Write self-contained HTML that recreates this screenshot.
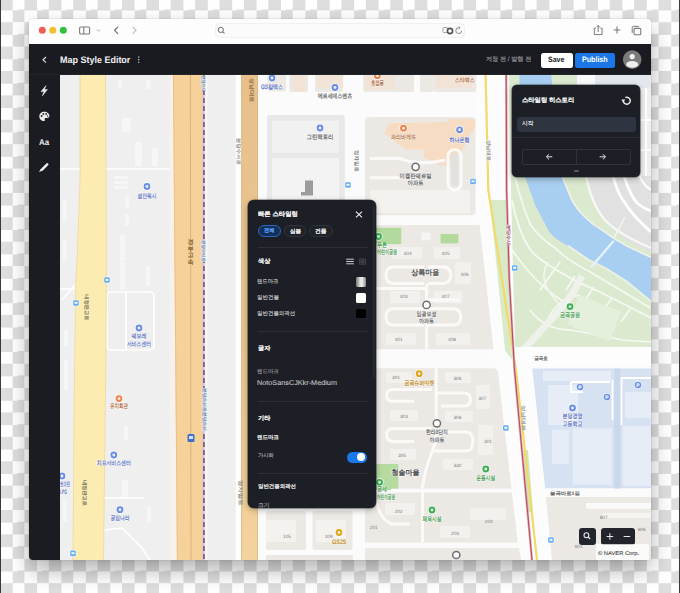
<!DOCTYPE html>
<html><head><meta charset="utf-8">
<style>
*{margin:0;padding:0;box-sizing:border-box}
html,body{width:680px;height:593px;overflow:hidden}
body{position:relative;font-family:"Liberation Sans",sans-serif;
background-color:#fff;
background-image:conic-gradient(#fff 0 25%,#dedede 0 50%,#fff 0 75%,#dedede 0);
background-size:24.4px 24.4px;background-position:0 -2.2px}
.abs{position:absolute}
.edgeL{position:absolute;left:0;top:0;width:1px;height:593px;background:#3a3a3a}
.edgeR{position:absolute;left:679px;top:0;width:1px;height:593px;background:#3a3a3a}
.win{position:absolute;left:28.8px;top:18.6px;width:622.2px;height:541.8px;border-radius:4px;overflow:hidden;
box-shadow:0 0 2px rgba(0,0,0,.2),0 10px 22px rgba(0,0,0,.3);background:#eee}
.pg{position:absolute;left:-28.8px;top:-18.6px;width:680px;height:593px}
.tb{position:absolute;left:28px;top:18px;width:624px;height:26px;background:#fdfdfd}
.hdr{position:absolute;left:28px;top:44px;width:624px;height:31px;background:#191b21;border-bottom:1px solid #22252c}
.side{position:absolute;left:28px;top:75px;width:32px;height:486px;background:#1a1c22}
.map{position:absolute;left:60px;top:74px;width:591px;height:486px;background:#efefef;overflow:hidden}
.txt{position:absolute;white-space:nowrap;line-height:1}
.tx{position:absolute;white-space:nowrap;line-height:1;font-size:40px;transform-origin:0 0;text-rendering:geometricPrecision}
.kr{font-family:"Liberation Sans",sans-serif}
.panel{position:absolute;background:#1c1f25;border-radius:6px;box-shadow:0 0 0 0.6px rgba(0,0,0,.55),0 2px 6px rgba(0,0,0,.3)}
.sep{position:absolute;height:1px;background:#2c2f36}
</style></head><body>
<div class="edgeL"></div><div class="edgeR"></div>
<div class="win"><div class="pg">
  <div class="map"><svg class="abs" style="left:0;top:0" width="591" height="486" viewBox="60 74 591 486" font-family="Liberation Sans, sans-serif">
<rect x="60" y="74" width="591" height="486" fill="#fbfbfb"/>
<!-- ===== LEFT ZONE ===== -->
<rect x="60" y="74" width="198" height="486" fill="#efefef"/>
<g fill="#f6f6f6">
<rect x="118" y="80" width="4" height="9"/><rect x="146" y="80" width="5" height="9"/>
<rect x="122" y="118" width="9" height="14"/><rect x="135" y="142" width="7" height="24"/><rect x="152" y="148" width="6" height="18"/>
<rect x="114" y="176" width="14" height="3"/><rect x="114" y="181" width="14" height="3"/><rect x="114" y="186" width="14" height="3"/>
<rect x="125" y="196" width="4" height="12"/><rect x="125" y="214" width="4" height="12"/>
<rect x="120" y="235" width="5" height="26"/><rect x="120" y="262" width="5" height="28"/><rect x="146" y="266" width="4" height="20"/>
<rect x="63" y="200" width="4" height="20"/><rect x="63" y="240" width="4" height="20"/>
<rect x="64" y="330" width="4" height="16"/><rect x="64" y="360" width="4" height="30"/>
<rect x="124" y="425" width="4" height="15"/><rect x="122" y="480" width="6" height="18"/><rect x="147" y="506" width="4" height="16"/>
<rect x="63" y="500" width="4" height="22"/>
</g>
<g stroke="#ffffff" fill="none" stroke-width="1.6">
<path d="M60 169H80M105 169H173"/>
<path d="M60 289H76M62 300L76 284"/>
<rect x="107" y="292" width="47" height="58" rx="4"/>
<path d="M126 292V350"/>
<path d="M104 498H144"/>
<path d="M104 530L122 528L142 548L150 560"/>
</g>
<path d="M80 74H105.5L106.4 250L106 350L103.5 560H73L74 420L75.7 285L77.5 250L80 180Z" fill="#fcecb1"/>
<path d="M80 74L80 180L77.5 250L75.7 285L74 420L73 560" stroke="#f1d79a" stroke-width="0.8" fill="none"/>
<path d="M105.5 74L106.4 250L106 350L103.5 560" stroke="#f1d79a" stroke-width="0.8" fill="none"/>
<path d="M169.5 74H173L177 560H170Z" fill="#f6f1ec"/>
<path d="M173 74H202.5L203.3 560H177Z" fill="#f6d199"/>
<path d="M173.4 74L177.4 560M202.2 74L203 560" stroke="#ebbb7e" stroke-width="0.8"/>
<path d="M190.4 74L191 560" stroke="#dcae74" stroke-width="0.9"/>
<rect x="202.4" y="74" width="3" height="486" fill="#dccbdc"/>
<path d="M203.9 74V560" stroke="#6f5b74" stroke-width="1.6" stroke-dasharray="5 3"/>
<rect x="205.4" y="74" width="1.8" height="486" fill="#fafafa"/>
<rect x="235.8" y="74" width="5.5" height="486" fill="#ffffff"/>
<defs><linearGradient id="og" x1="0" y1="0" x2="0" y2="1"><stop offset="0" stop-color="#e8c08b"/><stop offset="0.55" stop-color="#eac592"/><stop offset="1" stop-color="#f5d39c"/></linearGradient></defs><rect x="241.3" y="74" width="16.5" height="486" fill="url(#og)"/>
<path d="M241.6 74V560M257.5 74V560" stroke="#dcb078" stroke-width="0.7"/>

<!-- ===== CENTER ZONE ===== -->
<g fill="#ece9e5">
<!-- top row -->
<rect x="267.4" y="70" width="18.6" height="21.6" rx="2"/>
<rect x="289.4" y="70" width="18.6" height="22" rx="2"/>
<rect x="315" y="70" width="28.2" height="22" rx="2"/>
<rect x="363" y="70" width="51" height="22" rx="2"/>
<rect x="420" y="70" width="14" height="22" rx="2"/>
<rect x="434" y="70" width="42.5" height="22" rx="2"/>
<!-- row 2 -->
<rect x="266.8" y="115" width="78" height="100" rx="3" fill="#e8e8e8"/>
<rect x="365" y="117" width="110.5" height="98.3" rx="4"/>
<!-- row 3 (behind panel) -->
<rect x="266" y="225" width="76" height="124" rx="3"/>
<path d="M350 225H479.8L493.7 349.2H350Z"/>
<!-- row 4 -->
<rect x="266" y="362" width="76" height="128" rx="3"/>
<path d="M350 368.3H493Q497 368.3 498 372L511.7 488.7H350Z"/>
<!-- row 5 -->
<rect x="266" y="511" width="40" height="39" rx="2"/>
<rect x="312.5" y="511" width="40" height="39" rx="2"/>
<path d="M365 492.5H512L518 542.5H365Z"/>
<path d="M365 548H519L522 565H365Z"/>
<rect x="266" y="555" width="87" height="10"/>
</g>
<!-- buildings light in blocks -->
<g fill="#f4f2ef">
<rect x="272" y="120.7" width="67" height="32" rx="1" fill="#f1f1f1"/>
<rect x="272" y="158" width="67" height="57" fill="#f3f3f3"/>
<rect x="370" y="190" width="100" height="23"/>
<rect x="266" y="520" width="30" height="22"/><rect x="316" y="520" width="30" height="22"/>
</g>
<g fill="#f1e3d5">
<rect x="292" y="74" width="13" height="18"/>
<rect x="317" y="74" width="26" height="14"/>
<rect x="365" y="74" width="30" height="16"/>
<rect x="436" y="74" width="36" height="14"/>
</g>
<!-- peach landmark building -->
<path d="M384.2 133.3L389.3 123.2L446 122.1L450 119.1L475.3 119.1L475.3 126.2L462.2 150.5L446 165.7L438.9 164.7L423.7 157.6L423.7 149.5L405.5 149.5Z" fill="#f5dcc2"/>
<!-- dark 3d building -->
<path d="M305 180.6H313V195.5H301V192H305Z" fill="#9c9c9c"/>
<!-- green patches -->
<rect x="376" y="227.7" width="25.3" height="16.4" fill="#b3da9d"/>
<rect x="440.6" y="234" width="17.7" height="9.4" fill="#b3da9d"/>
<rect x="421.6" y="232.7" width="8.8" height="7.6" fill="#f6f5f3"/>
<rect x="376" y="464" width="22.4" height="24.7" fill="#b6dba1"/>
<rect x="370" y="480" width="21" height="10" fill="#b6dba1"/>
<rect x="560" y="514" width="11" height="6" fill="#bfe0ab"/>
<!-- light buildings -->
<g fill="#f3f1ee">
<rect x="392" y="247" width="30" height="12" rx="1"/><rect x="434" y="247" width="26" height="12" rx="1"/>
<rect x="455" y="262" width="16" height="22" rx="1"/>
<rect x="390" y="291" width="30" height="12" rx="1"/><rect x="434" y="291" width="28" height="12" rx="1"/>
<rect x="386" y="333" width="30" height="12" rx="1"/><rect x="436" y="333" width="34" height="12" rx="1"/>
<rect x="386" y="372" width="26" height="11" rx="1"/><rect x="445" y="372" width="26" height="11" rx="1"/>
<rect x="476" y="385" width="14" height="24" rx="1"/>
<rect x="390" y="410" width="28" height="11" rx="1"/><rect x="445" y="411" width="28" height="11" rx="1"/>
<rect x="478" y="425" width="15" height="30" rx="1"/>
<rect x="390" y="449" width="26" height="11" rx="1"/><rect x="443" y="459" width="30" height="11" rx="1"/>
<rect x="385" y="503" width="30" height="12" rx="1"/><rect x="470" y="508" width="36" height="12" rx="1"/>
<rect x="440" y="526" width="30" height="12" rx="1"/>
</g>
<!-- white inner roads / loops -->
<g stroke="#fbfaf8" fill="none" stroke-width="3">
<path d="M426.6 284V349"/>
<path d="M376 288.5H426.6M426.6 300H460"/>
<path d="M424 267H393Q386 267 386 275Q386 283.4 393 283.4H424"/>
<path d="M428 267H443Q450.7 267 450.7 275Q450.7 283.4 443 283.4H428"/>
<path d="M424 308.7H393Q386 308.7 386 316.8Q386 325 393 325H424"/>
<path d="M428 308.7H453Q460.8 308.7 460.8 316.8Q460.8 325 453 325H428"/>
<path d="M436.2 368.3V423.7Q436 440 433.8 447.3Q428 462 425.6 471L422 488.7"/>
<path d="M432 389.5H393Q386.6 389.5 386.6 395.4Q386.6 401.3 393 401.3H414"/>
<path d="M436.2 393H464Q470.4 393 470.4 399.5Q470.4 406 464 406H441"/>
<path d="M432 428.5H393Q386.6 428.5 386.6 435Q386.6 441.4 393 441.4H414"/>
<path d="M436 432H466Q472.8 432 472.8 441.5Q472.8 451 466 451H433"/>
<path d="M422.5 492.5V542M376 500Q380 520 392 524H410M365 545H520"/>
<rect x="448" y="149.5" width="13.2" height="40.5" rx="6.6"/>
<path d="M370 158.6H400Q420 166 445 160M370 177.8H400"/>
<path d="M345 98L375 114M345 114L375 98"/>
</g>
<g fill="#e3e1dd"><rect x="451" y="153" width="7" height="33" rx="3"/></g>

<!-- ===== RIGHT ZONE ===== -->
<!-- park west of river -->
<path d="M508 74H651V347H515Z" fill="#dbeacf"/>
<!-- gray urban NE of river -->
<path d="M587 176H651V252Q636 247 626 240Q610 230 601 218Q592 200 587 176Z" fill="#e1e1e1"/>
<path d="M577 74H651V90H577Z" fill="#fafafa"/>
<path d="M595 74H651V88H595Z" fill="#e3e8ef"/>
<path d="M586 176Q592 205 605 220Q618 234 651 248" stroke="#f7f7f3" stroke-width="2.4" fill="none"/>
<g stroke="#ffffff" fill="none" stroke-width="2.8">
<path d="M613 176Q618 195 625 203Q632 215 651 232"/>
<path d="M624 176Q630 195 637 203Q643 208 651 211"/>
</g>
<path d="M625 217L613 240" stroke="#f4f4f4" stroke-width="1.6"/>
<path d="M640 176Q642 184 651 190" stroke="#fff" stroke-width="2" fill="none"/>
<rect x="640.4" y="88" width="11" height="88" fill="#eeeeee"/><path d="M640.4 120H651M640.4 150H651M646 88V176" stroke="#fff" stroke-width="2"/>
<!-- river -->
<path d="M519.3 74H551.3Q555 130 561.9 176L570.8 197.8Q577 210 586 218Q593 225 601.1 229.4L613.8 238.3L626.4 245.9L651 257.3V301.5L626.4 281.3L606.2 268.7L588.5 259.8L568.2 245.9Q556 240 549.3 232L535.4 205.4L524.7 176Q520 120 519.3 74Z" fill="#a8cff1"/>
<!-- bank strips -->
<path d="M568.2 245.9L588.5 259.8L606.2 268.7L626.4 281.3L651 301.5" stroke="#e9f1e2" stroke-width="2" fill="none"/>
<path d="M561.9 176L570.8 197.8Q577 210 586 218Q593 225 601.1 229.4L613.8 238.3L626.4 245.9L651 257.3" stroke="#f2f2ee" stroke-width="1.5" fill="none"/>
<path d="M591 267.4L613.8 240.8" stroke="#e4f0fb" stroke-width="2.4"/>
<!-- park paths -->
<g stroke="#f6f9f2" fill="none" stroke-width="1.7">
<path d="M515 177.6Q522 205 530.3 224.4Q540 238 555.6 248.4Q570 262 588.5 271L650.5 307.9"/>
<path d="M512 200Q520 240 535 255Q560 275 600 292L651 318"/>
<path d="M512 250Q540 290 570 305"/>
<path d="M548 320Q555 300 580 295"/>
<path d="M540 290L560 262"/>
<path d="M575 276L566 290M594 287L585 300M612 298L603 311M630 309L621 322"/>
<path d="M530 310Q545 330 570 330Q600 335 622 340L651 342"/>
</g>
<rect x="572" y="302" width="45" height="32" fill="#e5f0dc" transform="rotate(22 594 318)"/>
<path d="M524 349L560 310L573 293L582 276" stroke="#eff2ec" stroke-width="7" fill="none"/>
<path d="M548 262Q540 275 548 290Q555 300 560 305" stroke="#f3f6f0" stroke-width="1.6" fill="none"/>
<!-- road between park and school -->
<rect x="515" y="347" width="136" height="18.6" fill="#fdfdfd"/>
<!-- school -->
<path d="M532.3 368.5H651V488.3H545Z" fill="#d6e2f2"/>
<g fill="#e6edf7">
<rect x="543" y="371" width="68" height="10"/>
<rect x="552" y="429.6" width="17" height="34.4"/>
<rect x="572.7" y="428.4" width="39.2" height="56.3"/>
<rect x="622.9" y="426" width="28" height="60"/>
<rect x="548" y="385" width="30" height="40"/>
<rect x="625" y="392" width="26" height="26"/>
</g>
<rect x="614.3" y="368.5" width="6.1" height="120" fill="#cad8ec"/>
<g stroke="#ffffff" fill="none" stroke-width="1.8">
<path d="M612.5 380V420M621.5 425V378H651"/>
<path d="M571 382H610M571 382V392H583"/>
</g>
<!-- beige block below school -->
<rect x="545.4" y="497" width="106" height="65" fill="#ece9e5"/>
<rect x="586" y="503" width="65" height="5.7" fill="#fafafa"/>
<rect x="603" y="513" width="48" height="5" fill="#f6f4f1"/>
<!-- white road corridor -->
<path d="M476.5 74H509Q511 260 515 347L532 368.5L545 488.3L552 560H522L518 542.5L511.7 488.7L498 368.3L493.7 349.2L479.8 225L476.5 215Z" fill="#fcfcfc"/>
<!-- green strip between lines -->
<path d="M490 200L506 200L510 300L512 360L505 350L498 280Z" fill="#d8eac8"/>
<path d="M523 450L528 450L533 512L528 512Z" fill="#cfe6bb"/>
<!-- yellow & red lines -->
<path d="M485.6 74L488.3 190L502 280L516.5 374L537 560" stroke="#f0da6a" stroke-width="2.2" fill="none"/>
<path d="M506.2 74L506.6 190L509.3 280L514.5 370L532 560" stroke="#e3a9b0" stroke-width="2.4" fill="none"/><path d="M506.2 74L506.6 190L509.3 280L514.5 370L532 560" stroke="#b24a5c" stroke-width="1" fill="none"/>
<g text-rendering="geometricPrecision" font-family="Liberation Sans, sans-serif"><circle cx="147" cy="186.5" r="4.2" fill="#fff" opacity="0.8"/><circle cx="147" cy="186.5" r="3.4" fill="#6b8ee3"/><circle cx="147" cy="186.5" r="1.43" fill="#fff" opacity="0.85"/>
<text x="147" y="197.5" font-size="6.3" text-anchor="middle" textLength="19" lengthAdjust="spacingAndGlyphs" fill="none" stroke="#fff" stroke-width="1.2" stroke-opacity="0.8">섬안워시</text>
<text x="147" y="197.5" font-size="6.3" text-anchor="middle" textLength="19" lengthAdjust="spacingAndGlyphs" fill="#5871c2" stroke="#5871c2" stroke-width="0.2">섬안워시</text>
<circle cx="139" cy="328" r="4.2" fill="#fff" opacity="0.8"/><circle cx="139" cy="328" r="3.4" fill="#6b8ee3"/><circle cx="139" cy="328" r="1.43" fill="#fff" opacity="0.85"/>
<text x="139" y="338.2" font-size="6.3" text-anchor="middle" textLength="15" lengthAdjust="spacingAndGlyphs" fill="none" stroke="#fff" stroke-width="1.2" stroke-opacity="0.8">쉐보레</text>
<text x="139" y="338.2" font-size="6.3" text-anchor="middle" textLength="15" lengthAdjust="spacingAndGlyphs" fill="#5871c2" stroke="#5871c2" stroke-width="0.2">쉐보레</text>
<text x="139" y="346.2" font-size="6.3" text-anchor="middle" textLength="24" lengthAdjust="spacingAndGlyphs" fill="none" stroke="#fff" stroke-width="1.2" stroke-opacity="0.8">서비스센터</text>
<text x="139" y="346.2" font-size="6.3" text-anchor="middle" textLength="24" lengthAdjust="spacingAndGlyphs" fill="#5871c2" stroke="#5871c2" stroke-width="0.2">서비스센터</text>
<circle cx="119" cy="398.6" r="4.2" fill="#fff" opacity="0.8"/><circle cx="119" cy="398.6" r="3.4" fill="#ea8550"/><circle cx="119" cy="398.6" r="1.43" fill="#fff" opacity="0.85"/>
<text x="119" y="408.40000000000003" font-size="6.3" text-anchor="middle" textLength="18" lengthAdjust="spacingAndGlyphs" fill="none" stroke="#fff" stroke-width="1.2" stroke-opacity="0.8">유치회관</text>
<text x="119" y="408.40000000000003" font-size="6.3" text-anchor="middle" textLength="18" lengthAdjust="spacingAndGlyphs" fill="#b0693c" stroke="#b0693c" stroke-width="0.2">유치회관</text>
<circle cx="113.8" cy="455" r="4.2" fill="#fff" opacity="0.8"/><circle cx="113.8" cy="455" r="3.4" fill="#6b8ee3"/><circle cx="113.8" cy="455" r="1.43" fill="#fff" opacity="0.85"/>
<text x="113.8" y="465.2" font-size="6.3" text-anchor="middle" textLength="34" lengthAdjust="spacingAndGlyphs" fill="none" stroke="#fff" stroke-width="1.2" stroke-opacity="0.8">치프서비스센터</text>
<text x="113.8" y="465.2" font-size="6.3" text-anchor="middle" textLength="34" lengthAdjust="spacingAndGlyphs" fill="#5871c2" stroke="#5871c2" stroke-width="0.2">치프서비스센터</text>
<circle cx="120" cy="509.7" r="4.2" fill="#fff" opacity="0.8"/><circle cx="120" cy="509.7" r="3.4" fill="#6b8ee3"/><circle cx="120" cy="509.7" r="1.43" fill="#fff" opacity="0.85"/>
<text x="120" y="520.2" font-size="6.3" text-anchor="middle" textLength="19" lengthAdjust="spacingAndGlyphs" fill="none" stroke="#fff" stroke-width="1.2" stroke-opacity="0.8">공임나라</text>
<text x="120" y="520.2" font-size="6.3" text-anchor="middle" textLength="19" lengthAdjust="spacingAndGlyphs" fill="#5871c2" stroke="#5871c2" stroke-width="0.2">공임나라</text>
<circle cx="62" cy="476" r="4.2" fill="#fff" opacity="0.8"/><circle cx="62" cy="476" r="3.4" fill="#6b8ee3"/><circle cx="62" cy="476" r="1.43" fill="#fff" opacity="0.85"/>
<text x="60" y="486" font-size="6.3" text-anchor="start" textLength="10" lengthAdjust="spacingAndGlyphs" fill="none" stroke="#fff" stroke-width="1.2" stroke-opacity="0.8">썬크린</text>
<text x="60" y="486" font-size="6.3" text-anchor="start" textLength="10" lengthAdjust="spacingAndGlyphs" fill="#5871c2" stroke="#5871c2" stroke-width="0.2">썬크린</text>
<text x="60" y="493.5" font-size="6.3" text-anchor="start" textLength="7" lengthAdjust="spacingAndGlyphs" fill="none" stroke="#fff" stroke-width="1.2" stroke-opacity="0.8">LPG</text>
<text x="60" y="493.5" font-size="6.3" text-anchor="start" textLength="7" lengthAdjust="spacingAndGlyphs" fill="#5871c2" stroke="#5871c2" stroke-width="0.2">LPG</text>
<rect x="103.7" y="276.7" width="6.6" height="6.6" rx="1.4" fill="#fff" opacity="0.9"/><rect x="104.2" y="277.2" width="5.6" height="5.6" rx="1.2" fill="#67aef0"/><rect x="105.5" y="278.8" width="3" height="2" fill="#fff" opacity="0.9"/>
<rect x="72.7" y="299.7" width="6.6" height="6.6" rx="1.4" fill="#fff" opacity="0.9"/><rect x="73.2" y="300.2" width="5.6" height="5.6" rx="1.2" fill="#67aef0"/><rect x="74.5" y="301.8" width="3" height="2" fill="#fff" opacity="0.9"/>
<rect x="69.7" y="550.1" width="6.6" height="6.6" rx="1.4" fill="#fff" opacity="0.9"/><rect x="70.2" y="550.6" width="5.6" height="5.6" rx="1.2" fill="#67aef0"/><rect x="71.5" y="552.1999999999999" width="3" height="2" fill="#fff" opacity="0.9"/>
<text x="190.7" y="244.0" font-size="6.2" text-anchor="middle" fill="#8a6a3a" stroke="#8a6a3a" stroke-width="0.25">경</text>
<text x="190.7" y="250.6" font-size="6.2" text-anchor="middle" fill="#8a6a3a" stroke="#8a6a3a" stroke-width="0.25">부</text>
<text x="190.7" y="257.2" font-size="6.2" text-anchor="middle" fill="#8a6a3a" stroke="#8a6a3a" stroke-width="0.25">고</text>
<text x="190.7" y="263.8" font-size="6.2" text-anchor="middle" fill="#8a6a3a" stroke="#8a6a3a" stroke-width="0.25">속</text>
<rect x="187.5" y="434" width="7" height="8" rx="1.5" fill="#3c6fd0"/><rect x="189" y="436" width="4" height="3" fill="#fff" opacity="0.8"/>
<circle cx="272" cy="78" r="4.2" fill="#fff" opacity="0.8"/><circle cx="272" cy="78" r="3.4" fill="#6b8ee3"/><circle cx="272" cy="78" r="1.43" fill="#fff" opacity="0.85"/>
<text x="272" y="88.9" font-size="6.3" text-anchor="middle" textLength="22" lengthAdjust="spacingAndGlyphs" fill="none" stroke="#fff" stroke-width="1.2" stroke-opacity="0.8">GS칼텍스</text>
<text x="272" y="88.9" font-size="6.3" text-anchor="middle" textLength="22" lengthAdjust="spacingAndGlyphs" fill="#5871c2" stroke="#5871c2" stroke-width="0.2">GS칼텍스</text>
<circle cx="335" cy="87.5" r="4.2" fill="#fff" opacity="0.8"/><circle cx="335" cy="87.5" r="3.4" fill="#6b8ee3"/><circle cx="335" cy="87.5" r="1.43" fill="#fff" opacity="0.85"/>
<text x="335" y="98.4" font-size="6.3" text-anchor="middle" textLength="34" lengthAdjust="spacingAndGlyphs" fill="none" stroke="#fff" stroke-width="1.2" stroke-opacity="0.8">메르세데스벤츠</text>
<text x="335" y="98.4" font-size="6.3" text-anchor="middle" textLength="34" lengthAdjust="spacingAndGlyphs" fill="#616161" stroke="#616161" stroke-width="0.2">메르세데스벤츠</text>
<circle cx="377.4" cy="75.7" r="4.2" fill="#fff" opacity="0.8"/><circle cx="377.4" cy="75.7" r="3.4" fill="#ea8550"/><circle cx="377.4" cy="75.7" r="1.43" fill="#fff" opacity="0.85"/>
<text x="377.4" y="84.7" font-size="6.3" text-anchor="middle" textLength="13" lengthAdjust="spacingAndGlyphs" fill="none" stroke="#fff" stroke-width="1.2" stroke-opacity="0.8">호접몽</text>
<text x="377.4" y="84.7" font-size="6.3" text-anchor="middle" textLength="13" lengthAdjust="spacingAndGlyphs" fill="#b0693c" stroke="#b0693c" stroke-width="0.2">호접몽</text>
<text x="464.7" y="82.2" font-size="6.3" text-anchor="middle" textLength="20" lengthAdjust="spacingAndGlyphs" fill="none" stroke="#fff" stroke-width="1.2" stroke-opacity="0.8">스타벅스</text>
<text x="464.7" y="82.2" font-size="6.3" text-anchor="middle" textLength="20" lengthAdjust="spacingAndGlyphs" fill="#b0693c" stroke="#b0693c" stroke-width="0.2">스타벅스</text>
<circle cx="320" cy="128" r="4.2" fill="#fff" opacity="0.8"/><circle cx="320" cy="128" r="3.4" fill="#6b8ee3"/><circle cx="320" cy="128" r="1.43" fill="#fff" opacity="0.85"/>
<text x="320" y="138.9" font-size="6.3" text-anchor="middle" textLength="27" lengthAdjust="spacingAndGlyphs" fill="none" stroke="#fff" stroke-width="1.2" stroke-opacity="0.8">그린팩토리</text>
<text x="320" y="138.9" font-size="6.3" text-anchor="middle" textLength="27" lengthAdjust="spacingAndGlyphs" fill="#616161" stroke="#616161" stroke-width="0.2">그린팩토리</text>
<circle cx="403.5" cy="128.2" r="4.2" fill="#fff" opacity="0.8"/><circle cx="403.5" cy="128.2" r="3.4" fill="#ea8550"/><circle cx="403.5" cy="128.2" r="1.43" fill="#fff" opacity="0.85"/>
<text x="403.5" y="139.0" font-size="6.3" text-anchor="middle" textLength="25" lengthAdjust="spacingAndGlyphs" fill="none" stroke="#fff" stroke-width="1.2" stroke-opacity="0.8">파리바게뜨</text>
<text x="403.5" y="139.0" font-size="6.3" text-anchor="middle" textLength="25" lengthAdjust="spacingAndGlyphs" fill="#b0693c" stroke="#b0693c" stroke-width="0.2">파리바게뜨</text>
<circle cx="459.6" cy="129.8" r="4.2" fill="#fff" opacity="0.8"/><circle cx="459.6" cy="129.8" r="3.4" fill="#6b8ee3"/><circle cx="459.6" cy="129.8" r="1.43" fill="#fff" opacity="0.85"/>
<text x="459.6" y="142.10000000000002" font-size="6.3" text-anchor="middle" textLength="20" lengthAdjust="spacingAndGlyphs" fill="none" stroke="#fff" stroke-width="1.2" stroke-opacity="0.8">하나은행</text>
<text x="459.6" y="142.10000000000002" font-size="6.3" text-anchor="middle" textLength="20" lengthAdjust="spacingAndGlyphs" fill="#5871c2" stroke="#5871c2" stroke-width="0.2">하나은행</text>
<circle cx="415.6" cy="166.8" r="3.6" fill="#fff" stroke="#6e6e6e" stroke-width="1.5"/>
<text x="415.6" y="177.70000000000002" font-size="6.3" text-anchor="middle" textLength="32" lengthAdjust="spacingAndGlyphs" fill="none" stroke="#fff" stroke-width="1.2" stroke-opacity="0.8">미켈란쉐르빌</text>
<text x="415.6" y="177.70000000000002" font-size="6.3" text-anchor="middle" textLength="32" lengthAdjust="spacingAndGlyphs" fill="#616161" stroke="#616161" stroke-width="0.2">미켈란쉐르빌</text>
<text x="415.6" y="184.8" font-size="6.3" text-anchor="middle" textLength="16" lengthAdjust="spacingAndGlyphs" fill="none" stroke="#fff" stroke-width="1.2" stroke-opacity="0.8">아파트</text>
<text x="415.6" y="184.8" font-size="6.3" text-anchor="middle" textLength="16" lengthAdjust="spacingAndGlyphs" fill="#616161" stroke="#616161" stroke-width="0.2">아파트</text>
<rect x="344.7" y="181.7" width="6.6" height="6.6" rx="1.4" fill="#fff" opacity="0.9"/><rect x="345.2" y="182.2" width="5.6" height="5.6" rx="1.2" fill="#67aef0"/><rect x="346.5" y="183.8" width="3" height="2" fill="#fff" opacity="0.9"/>
<rect x="469.7" y="178.2" width="6.6" height="6.6" rx="1.4" fill="#fff" opacity="0.9"/><rect x="470.2" y="178.7" width="5.6" height="5.6" rx="1.2" fill="#67aef0"/><rect x="471.5" y="180.3" width="3" height="2" fill="#fff" opacity="0.9"/>
<circle cx="378.5" cy="236.5" r="4.2" fill="#fff" opacity="0.8"/><circle cx="378.5" cy="236.5" r="3.4" fill="#3caf55"/><circle cx="378.5" cy="236.5" r="1.43" fill="#fff" opacity="0.85"/>
<text x="377" y="247" font-size="6.3" text-anchor="start" textLength="10" lengthAdjust="spacingAndGlyphs" fill="none" stroke="#fff" stroke-width="1.2" stroke-opacity="0.8">푸른</text>
<text x="377" y="247" font-size="6.3" text-anchor="start" textLength="10" lengthAdjust="spacingAndGlyphs" fill="#3c9a4c" stroke="#3c9a4c" stroke-width="0.2">푸른</text>
<text x="377" y="254" font-size="6.3" text-anchor="start" textLength="20" lengthAdjust="spacingAndGlyphs" fill="none" stroke="#fff" stroke-width="1.2" stroke-opacity="0.8">어린이공원</text>
<text x="377" y="254" font-size="6.3" text-anchor="start" textLength="20" lengthAdjust="spacingAndGlyphs" fill="#3c9a4c" stroke="#3c9a4c" stroke-width="0.2">어린이공원</text>
<text x="425.2" y="274.6" font-size="7.8" text-anchor="middle" textLength="28" lengthAdjust="spacingAndGlyphs" fill="none" stroke="#fff" stroke-width="1.4" stroke-opacity="0.8">상록마을</text><text x="425.2" y="274.6" font-size="7.8" text-anchor="middle" textLength="28" lengthAdjust="spacingAndGlyphs" fill="#555" stroke="#555" stroke-width="0.35">상록마을</text>
<text x="407.6" y="255.2" font-size="4.8" text-anchor="middle" fill="#7a7a7a">404</text>
<text x="445.6" y="255.2" font-size="4.8" text-anchor="middle" fill="#7a7a7a">405</text>
<text x="464.6" y="276.2" font-size="4.8" text-anchor="middle" fill="#7a7a7a">406</text>
<text x="403.8" y="298.2" font-size="4.8" text-anchor="middle" fill="#7a7a7a">403</text>
<text x="445.6" y="298.2" font-size="4.8" text-anchor="middle" fill="#7a7a7a">407</text>
<text x="398.8" y="340.7" font-size="4.8" text-anchor="middle" fill="#7a7a7a">401</text>
<text x="452" y="340.7" font-size="4.8" text-anchor="middle" fill="#7a7a7a">408</text>
<circle cx="426.6" cy="304.9" r="3.6" fill="#fff" stroke="#6e6e6e" stroke-width="1.5"/>
<text x="426.6" y="316.29999999999995" font-size="6.3" text-anchor="middle" textLength="20" lengthAdjust="spacingAndGlyphs" fill="none" stroke="#fff" stroke-width="1.2" stroke-opacity="0.8">임광보성</text>
<text x="426.6" y="316.29999999999995" font-size="6.3" text-anchor="middle" textLength="20" lengthAdjust="spacingAndGlyphs" fill="#616161" stroke="#616161" stroke-width="0.2">임광보성</text>
<text x="426.6" y="323.19999999999993" font-size="6.3" text-anchor="middle" textLength="15" lengthAdjust="spacingAndGlyphs" fill="none" stroke="#fff" stroke-width="1.2" stroke-opacity="0.8">아파트</text>
<text x="426.6" y="323.19999999999993" font-size="6.3" text-anchor="middle" textLength="15" lengthAdjust="spacingAndGlyphs" fill="#616161" stroke="#616161" stroke-width="0.2">아파트</text>
<circle cx="419.2" cy="373.7" r="4.2" fill="#fff" opacity="0.8"/><circle cx="419.2" cy="373.7" r="3.4" fill="#e3a21a"/><circle cx="419.2" cy="373.7" r="1.43" fill="#fff" opacity="0.85"/>
<text x="419.2" y="384.9" font-size="6.3" text-anchor="middle" textLength="30" lengthAdjust="spacingAndGlyphs" fill="none" stroke="#fff" stroke-width="1.2" stroke-opacity="0.8">금곡슈퍼마켓</text>
<text x="419.2" y="384.9" font-size="6.3" text-anchor="middle" textLength="30" lengthAdjust="spacingAndGlyphs" fill="#b9860f" stroke="#b9860f" stroke-width="0.2">금곡슈퍼마켓</text>
<text x="396" y="379.4" font-size="4.8" text-anchor="middle" fill="#7a7a7a">301</text>
<text x="457.4" y="380.1" font-size="4.8" text-anchor="middle" fill="#7a7a7a">306</text>
<text x="482.2" y="399.5" font-size="4.8" text-anchor="middle" fill="#7a7a7a">307</text>
<text x="403.9" y="417.7" font-size="4.8" text-anchor="middle" fill="#7a7a7a">303</text>
<text x="457.4" y="418.7" font-size="4.8" text-anchor="middle" fill="#7a7a7a">308</text>
<text x="488" y="443.1" font-size="4.8" text-anchor="middle" fill="#7a7a7a">301</text>
<text x="402" y="457.3" font-size="4.8" text-anchor="middle" fill="#7a7a7a">305</text>
<text x="457.4" y="467.2" font-size="4.8" text-anchor="middle" fill="#7a7a7a">330</text>
<circle cx="436.9" cy="423.3" r="3.6" fill="#fff" stroke="#6e6e6e" stroke-width="1.5"/>
<text x="436.9" y="434.2" font-size="6.3" text-anchor="middle" textLength="22" lengthAdjust="spacingAndGlyphs" fill="none" stroke="#fff" stroke-width="1.2" stroke-opacity="0.8">한라3단지</text>
<text x="436.9" y="434.2" font-size="6.3" text-anchor="middle" textLength="22" lengthAdjust="spacingAndGlyphs" fill="#616161" stroke="#616161" stroke-width="0.2">한라3단지</text>
<text x="436.9" y="441.5" font-size="6.3" text-anchor="middle" textLength="15" lengthAdjust="spacingAndGlyphs" fill="none" stroke="#fff" stroke-width="1.2" stroke-opacity="0.8">아파트</text>
<text x="436.9" y="441.5" font-size="6.3" text-anchor="middle" textLength="15" lengthAdjust="spacingAndGlyphs" fill="#616161" stroke="#616161" stroke-width="0.2">아파트</text>
<text x="405.5" y="474.5" font-size="7.4" text-anchor="middle" textLength="28" lengthAdjust="spacingAndGlyphs" fill="none" stroke="#fff" stroke-width="1.4" stroke-opacity="0.8">청솔마을</text><text x="405.5" y="474.5" font-size="7.4" text-anchor="middle" textLength="28" lengthAdjust="spacingAndGlyphs" fill="#555" stroke="#555" stroke-width="0.35">청솔마을</text>
<circle cx="485.8" cy="469" r="4.2" fill="#fff" opacity="0.8"/><circle cx="485.8" cy="469" r="3.4" fill="#3caf55"/><circle cx="485.8" cy="469" r="1.43" fill="#fff" opacity="0.85"/>
<text x="485.8" y="480.4" font-size="6.3" text-anchor="middle" textLength="19" lengthAdjust="spacingAndGlyphs" fill="none" stroke="#fff" stroke-width="1.2" stroke-opacity="0.8">운동시설</text>
<text x="485.8" y="480.4" font-size="6.3" text-anchor="middle" textLength="19" lengthAdjust="spacingAndGlyphs" fill="#3c9a4c" stroke="#3c9a4c" stroke-width="0.2">운동시설</text>
<circle cx="432" cy="510" r="4.2" fill="#fff" opacity="0.8"/><circle cx="432" cy="510" r="3.4" fill="#3caf55"/><circle cx="432" cy="510" r="1.43" fill="#fff" opacity="0.85"/>
<text x="432" y="520.6" font-size="6.3" text-anchor="middle" textLength="19" lengthAdjust="spacingAndGlyphs" fill="none" stroke="#fff" stroke-width="1.2" stroke-opacity="0.8">체육시설</text>
<text x="432" y="520.6" font-size="6.3" text-anchor="middle" textLength="19" lengthAdjust="spacingAndGlyphs" fill="#3c9a4c" stroke="#3c9a4c" stroke-width="0.2">체육시설</text>
<circle cx="379.5" cy="482.3" r="4.2" fill="#fff" opacity="0.8"/><circle cx="379.5" cy="482.3" r="3.4" fill="#3caf55"/><circle cx="379.5" cy="482.3" r="1.43" fill="#fff" opacity="0.85"/>
<text x="377" y="491.4" font-size="6.3" text-anchor="start" textLength="10" lengthAdjust="spacingAndGlyphs" fill="none" stroke="#fff" stroke-width="1.2" stroke-opacity="0.8">공세</text>
<text x="377" y="491.4" font-size="6.3" text-anchor="start" textLength="10" lengthAdjust="spacingAndGlyphs" fill="#3c9a4c" stroke="#3c9a4c" stroke-width="0.2">공세</text>
<text x="377" y="498.5" font-size="6.3" text-anchor="start" textLength="18" lengthAdjust="spacingAndGlyphs" fill="none" stroke="#fff" stroke-width="1.2" stroke-opacity="0.8">어린이공원</text>
<text x="377" y="498.5" font-size="6.3" text-anchor="start" textLength="18" lengthAdjust="spacingAndGlyphs" fill="#3c9a4c" stroke="#3c9a4c" stroke-width="0.2">어린이공원</text>
<text x="398.8" y="512.7" font-size="4.8" text-anchor="middle" fill="#7a7a7a">202</text>
<text x="373.8" y="529.2" font-size="4.8" text-anchor="middle" fill="#7a7a7a">201</text>
<text x="488.8" y="522.7" font-size="4.8" text-anchor="middle" fill="#7a7a7a">204</text>
<text x="455" y="535.4" font-size="4.8" text-anchor="middle" fill="#7a7a7a">203</text>
<circle cx="456.3" cy="555" r="3.6" fill="#fff" stroke="#6e6e6e" stroke-width="1.5"/>
<rect x="502.5" y="424.7" width="6.6" height="6.6" rx="1.4" fill="#fff" opacity="0.9"/><rect x="503.0" y="425.2" width="5.6" height="5.6" rx="1.2" fill="#67aef0"/><rect x="504.3" y="426.8" width="3" height="2" fill="#fff" opacity="0.9"/>
<text x="287" y="537.5" font-size="4.8" text-anchor="middle" fill="#7a7a7a">105</text>
<text x="328.7" y="537.5" font-size="4.8" text-anchor="middle" fill="#7a7a7a">109</text>
<circle cx="339" cy="532.5" r="4.2" fill="#fff" opacity="0.8"/><circle cx="339" cy="532.5" r="3.4" fill="#e3a21a"/><circle cx="339" cy="532.5" r="1.43" fill="#fff" opacity="0.85"/>
<text x="339" y="544.2" font-size="6.3" text-anchor="middle" textLength="14" lengthAdjust="spacingAndGlyphs" fill="none" stroke="#fff" stroke-width="1.2" stroke-opacity="0.8">GS25</text>
<text x="339" y="544.2" font-size="6.3" text-anchor="middle" textLength="14" lengthAdjust="spacingAndGlyphs" fill="#b9860f" stroke="#b9860f" stroke-width="0.2">GS25</text>
<circle cx="570" cy="306.6" r="4.2" fill="#fff" opacity="0.8"/><circle cx="570" cy="306.6" r="3.4" fill="#3caf55"/><circle cx="570" cy="306.6" r="1.43" fill="#fff" opacity="0.85"/>
<text x="570" y="317.20000000000005" font-size="6.3" text-anchor="middle" textLength="20" lengthAdjust="spacingAndGlyphs" fill="none" stroke="#fff" stroke-width="1.2" stroke-opacity="0.8">금곡공원</text>
<text x="570" y="317.20000000000005" font-size="6.3" text-anchor="middle" textLength="20" lengthAdjust="spacingAndGlyphs" fill="#3c9a4c" stroke="#3c9a4c" stroke-width="0.2">금곡공원</text>
<text x="541" y="359.5" font-size="4.8" text-anchor="middle" textLength="13" lengthAdjust="spacingAndGlyphs" fill="none" stroke="#fff" stroke-width="1.2" stroke-opacity="0.8">금곡로</text>
<text x="541" y="359.5" font-size="4.8" text-anchor="middle" textLength="13" lengthAdjust="spacingAndGlyphs" fill="#616161" stroke="#616161" stroke-width="0.2">금곡로</text>
<circle cx="572.5" cy="408" r="4.2" fill="#fff" opacity="0.8"/><circle cx="572.5" cy="408" r="3.4" fill="#6b8ee3"/><circle cx="572.5" cy="408" r="1.43" fill="#fff" opacity="0.85"/>
<text x="572.5" y="418.2" font-size="6.3" text-anchor="middle" textLength="20" lengthAdjust="spacingAndGlyphs" fill="none" stroke="#fff" stroke-width="1.2" stroke-opacity="0.8">분당경영</text>
<text x="572.5" y="418.2" font-size="6.3" text-anchor="middle" textLength="20" lengthAdjust="spacingAndGlyphs" fill="#5871c2" stroke="#5871c2" stroke-width="0.2">분당경영</text>
<text x="572.5" y="426.2" font-size="6.3" text-anchor="middle" textLength="20" lengthAdjust="spacingAndGlyphs" fill="none" stroke="#fff" stroke-width="1.2" stroke-opacity="0.8">고등학교</text>
<text x="572.5" y="426.2" font-size="6.3" text-anchor="middle" textLength="20" lengthAdjust="spacingAndGlyphs" fill="#5871c2" stroke="#5871c2" stroke-width="0.2">고등학교</text>
<circle cx="580" cy="387" r="3.8" fill="#fff" opacity="0.8"/><circle cx="580" cy="387" r="3.3" fill="#6b95e3"/><text x="580" y="388.8" font-size="5" font-weight="bold" text-anchor="middle" fill="#fff">P</text>
<circle cx="607" cy="397" r="3.8" fill="#fff" opacity="0.8"/><circle cx="607" cy="397" r="3.3" fill="#6b95e3"/><text x="607" y="398.8" font-size="5" font-weight="bold" text-anchor="middle" fill="#fff">P</text>
<circle cx="638" cy="385" r="3.8" fill="#fff" opacity="0.8"/><circle cx="638" cy="385" r="3.3" fill="#6b95e3"/><text x="638" y="386.8" font-size="5" font-weight="bold" text-anchor="middle" fill="#fff">P</text>
<text x="565" y="494.5" font-size="4.8" text-anchor="middle" textLength="30" lengthAdjust="spacingAndGlyphs" fill="none" stroke="#fff" stroke-width="1.2" stroke-opacity="0.8">불곡마로1길</text>
<text x="565" y="494.5" font-size="4.8" text-anchor="middle" textLength="30" lengthAdjust="spacingAndGlyphs" fill="#616161" stroke="#616161" stroke-width="0.2">불곡마로1길</text>
<text x="603.7" y="518.7" font-size="4.8" text-anchor="middle" fill="#7a7a7a">807</text>
<text x="641.7" y="530.7" font-size="4.8" text-anchor="middle" fill="#7a7a7a">806</text>
<text x="578.7" y="548.4" font-size="4.8" text-anchor="middle" fill="#7a7a7a">601</text>
<rect x="511.40000000000003" y="264.7" width="6.6" height="6.6" rx="1.4" fill="#fff" opacity="0.9"/><rect x="511.90000000000003" y="265.2" width="5.6" height="5.6" rx="1.2" fill="#67aef0"/><rect x="513.2" y="266.8" width="3" height="2" fill="#fff" opacity="0.9"/>
<rect x="547.7" y="536.7" width="6.6" height="6.6" rx="1.4" fill="#fff" opacity="0.9"/><rect x="548.2" y="537.2" width="5.6" height="5.6" rx="1.2" fill="#67aef0"/><rect x="549.5" y="538.8" width="3" height="2" fill="#fff" opacity="0.9"/>
<text x="85.8" y="307.45" transform="rotate(90 85.8 307.45)" font-size="5.2" text-anchor="middle" dominant-baseline="central" textLength="25.899999999999977" lengthAdjust="spacingAndGlyphs" fill="none" stroke="#fcecb1" stroke-width="1.2">내정판교로</text>
<text x="85.8" y="307.45" transform="rotate(90 85.8 307.45)" font-size="5.2" text-anchor="middle" dominant-baseline="central" textLength="25.899999999999977" lengthAdjust="spacingAndGlyphs" fill="#6a6a5a" stroke="#6a6a5a" stroke-width="0.15">내정판교로</text>
<text x="83.6" y="493.0" transform="rotate(90 83.6 493.0)" font-size="5.2" text-anchor="middle" dominant-baseline="central" textLength="26" lengthAdjust="spacingAndGlyphs" fill="none" stroke="#fcecb1" stroke-width="1.2">내정판교로</text>
<text x="83.6" y="493.0" transform="rotate(90 83.6 493.0)" font-size="5.2" text-anchor="middle" dominant-baseline="central" textLength="26" lengthAdjust="spacingAndGlyphs" fill="#6a6a5a" stroke="#6a6a5a" stroke-width="0.15">내정판교로</text>
<text x="203.4" y="83.5" transform="rotate(90 203.4 83.5)" font-size="4.6" text-anchor="middle" dominant-baseline="central" textLength="15" lengthAdjust="spacingAndGlyphs" fill="none" stroke="#e6eef6" stroke-width="1.2">분당수서</text>
<text x="203.4" y="83.5" transform="rotate(90 203.4 83.5)" font-size="4.6" text-anchor="middle" dominant-baseline="central" textLength="15" lengthAdjust="spacingAndGlyphs" fill="#7a8aa0" stroke="#7a8aa0" stroke-width="0.15">분당수서</text>
<text x="203.8" y="251.0" transform="rotate(90 203.8 251.0)" font-size="4.6" text-anchor="middle" dominant-baseline="central" textLength="22" lengthAdjust="spacingAndGlyphs" fill="none" stroke="#e6eef6" stroke-width="1.2">분당수서로</text>
<text x="203.8" y="251.0" transform="rotate(90 203.8 251.0)" font-size="4.6" text-anchor="middle" dominant-baseline="central" textLength="22" lengthAdjust="spacingAndGlyphs" fill="#7a8aa0" stroke="#7a8aa0" stroke-width="0.15">분당수서로</text>
<text x="204" y="409.5" transform="rotate(90 204 409.5)" font-size="4.6" text-anchor="middle" dominant-baseline="central" textLength="43" lengthAdjust="spacingAndGlyphs" fill="none" stroke="#e6eef6" stroke-width="1.2">분당수서로분당수서</text>
<text x="204" y="409.5" transform="rotate(90 204 409.5)" font-size="4.6" text-anchor="middle" dominant-baseline="central" textLength="43" lengthAdjust="spacingAndGlyphs" fill="#7a8aa0" stroke="#7a8aa0" stroke-width="0.15">분당수서로분당수서</text>
<text x="251.2" y="90.15" transform="rotate(90 251.2 90.15)" font-size="5.4" text-anchor="middle" dominant-baseline="central" textLength="24.299999999999997" lengthAdjust="spacingAndGlyphs" fill="#8a6a40" stroke="#8a6a40" stroke-width="0.15">성남대로</text>
<text x="240" y="492.85" transform="rotate(90 240 492.85)" font-size="5" text-anchor="middle" dominant-baseline="central" textLength="25.69999999999999" lengthAdjust="spacingAndGlyphs" fill="#888" stroke="#888" stroke-width="0.15">정자일로</text>
<text x="238" y="151.5" transform="rotate(90 238 151.5)" font-size="5" text-anchor="middle" dominant-baseline="central" textLength="27" lengthAdjust="spacingAndGlyphs" fill="none" stroke="#fff" stroke-width="1.2">분당수서로</text>
<text x="238" y="151.5" transform="rotate(90 238 151.5)" font-size="5" text-anchor="middle" dominant-baseline="central" textLength="27" lengthAdjust="spacingAndGlyphs" fill="#888" stroke="#888" stroke-width="0.15">분당수서로</text>
<text x="355.8" y="161.0" transform="rotate(90 355.8 161.0)" font-size="5.2" text-anchor="middle" dominant-baseline="central" textLength="22" lengthAdjust="spacingAndGlyphs" fill="none" stroke="#fff" stroke-width="1.2">정자일로</text>
<text x="355.8" y="161.0" transform="rotate(90 355.8 161.0)" font-size="5.2" text-anchor="middle" dominant-baseline="central" textLength="22" lengthAdjust="spacingAndGlyphs" fill="#777" stroke="#777" stroke-width="0.15">정자일로</text>
<text x="488.3" y="150.5" transform="rotate(90 488.3 150.5)" font-size="5" text-anchor="middle" dominant-baseline="central" textLength="21" lengthAdjust="spacingAndGlyphs" fill="none" stroke="#fff" stroke-width="1.2">성남대로</text>
<text x="488.3" y="150.5" transform="rotate(90 488.3 150.5)" font-size="5" text-anchor="middle" dominant-baseline="central" textLength="21" lengthAdjust="spacingAndGlyphs" fill="#888" stroke="#888" stroke-width="0.15">성남대로</text>
<text x="507" y="235.0" transform="rotate(90 507 235.0)" font-size="4.8" text-anchor="middle" dominant-baseline="central" textLength="20" lengthAdjust="spacingAndGlyphs" fill="none" stroke="#fff" stroke-width="1.2">분당수서</text>
<text x="507" y="235.0" transform="rotate(90 507 235.0)" font-size="4.8" text-anchor="middle" dominant-baseline="central" textLength="20" lengthAdjust="spacingAndGlyphs" fill="#a05060" stroke="#a05060" stroke-width="0.15">분당수서</text>
<text x="522.5" y="418.0" transform="rotate(90 522.5 418.0)" font-size="4.8" text-anchor="middle" dominant-baseline="central" textLength="26" lengthAdjust="spacingAndGlyphs" fill="#999" stroke="#999" stroke-width="0.15">성남대로</text></g>
</svg>
</div>
  <div class="tb"></div>
  <!-- toolbar -->
  <svg class="abs" style="left:0;top:0" width="680" height="44" viewBox="0 0 680 44">
    <circle cx="42.3" cy="30.3" r="3.5" fill="#ee5e58"/>
    <circle cx="52.8" cy="30.3" r="3.5" fill="#f4be30"/>
    <circle cx="63.3" cy="30.3" r="3.5" fill="#34c140"/>
    <rect x="79.6" y="27" width="10" height="7" rx="1.3" fill="none" stroke="#7a7a7a" stroke-width="1.1"/>
    <path d="M83.8 27V34" stroke="#7a7a7a" stroke-width="1.1"/>
    <path d="M97.2 29.6L98.6 31.2L100 29.6" fill="none" stroke="#a0a0a0" stroke-width="0.9"/>
    <path d="M118 26.8L114.6 30.3L118 33.8" fill="none" stroke="#6a6a6a" stroke-width="1.2"/>
    <path d="M132.6 26.8L136 30.3L132.6 33.8" fill="none" stroke="#c0c0c0" stroke-width="1.2"/>
    <rect x="215.5" y="23.5" width="249" height="14" rx="4" fill="#fbfbfb" stroke="#eeeeee" stroke-width="0.8"/>
    <circle cx="220.8" cy="29.9" r="2.6" fill="none" stroke="#6e6e6e" stroke-width="1"/>
    <path d="M222.7 31.8L224.5 33.4" stroke="#6e6e6e" stroke-width="1.1"/>
    <rect x="443" y="27.5" width="4.5" height="5" rx="0.8" fill="none" stroke="#9a9a9a" stroke-width="0.9"/>
    <circle cx="450" cy="31" r="2.6" fill="none" stroke="#555" stroke-width="1.6"/>
    <path d="M461.6 30.6A2.9 2.9 0 1 1 459.3 27.8" fill="none" stroke="#8a8a8a" stroke-width="1"/>
    <path d="M458.6 26.6L460.2 27.8L458.8 29.2" fill="none" stroke="#8a8a8a" stroke-width="0.9"/>
    <path d="M596 28.2H594.3V34.6H602.1V28.2H600.4M598.2 32V25.6M596.5 27.2L598.2 25.5L599.9 27.2" fill="none" stroke="#7a7a7a" stroke-width="1"/>
    <path d="M617 26.6V33.4M613.6 30H620.4" stroke="#7a7a7a" stroke-width="1.1"/>
    <path d="M632.2 32.8V27.5Q632.2 26.4 633.3 26.4H638.8" fill="none" stroke="#7a7a7a" stroke-width="1"/>
    <rect x="634" y="28.4" width="6.8" height="6.4" rx="1" fill="none" stroke="#7a7a7a" stroke-width="1.1"/>
  </svg>
  <div class="hdr"></div>
  <svg class="abs" style="left:0;top:44px" width="680" height="31" viewBox="0 44 680 31">
    <path d="M46 57L43 59.8L46 62.6" fill="none" stroke="#d8d8d8" stroke-width="1.2"/>
    <g fill="#b8b8b8"><circle cx="138.7" cy="57" r="0.8"/><circle cx="138.7" cy="59.6" r="0.8"/><circle cx="138.7" cy="62.2" r="0.8"/></g>
    <circle cx="632.2" cy="59.6" r="9.3" fill="#7b7b7b"/>
    <circle cx="632.2" cy="56.6" r="2.6" fill="#f2f2f2"/>
    <ellipse cx="632.2" cy="64.4" rx="6" ry="3.4" fill="#efefef"/>
  </svg>
  <div class="abs" style="left:540.5px;top:52.5px;width:32.5px;height:15px;border-radius:2.5px;background:#fff"></div>
  <div class="abs" style="left:574.5px;top:52.5px;width:40px;height:15px;border-radius:2.5px;background:#1b78e6"></div>
  <div class="side"></div>
  <svg class="abs" style="left:29px;top:75px" width="31" height="110" viewBox="29 75 31 110">
    <path d="M46 85.6L41 91.6H44L42.4 95.8L47.4 89.6H44.4Z" fill="#ececec" stroke="#ececec" stroke-width="0.5" stroke-linejoin="round"/>
    <path d="M44.3 111.8C41.5 111.8 39.3 113.8 39.3 116.4C39.3 119 41.4 121 44 121C45 121 45.2 120.3 44.8 119.6C44.3 118.8 44.8 118 45.8 118H47.2C48.5 118 49.4 117.1 49.4 115.8C49.4 113.5 47.1 111.8 44.3 111.8Z" fill="#ececec"/>
    <g fill="#1b1d22"><circle cx="41.6" cy="116" r="0.9"/><circle cx="43.4" cy="113.9" r="0.9"/><circle cx="46.2" cy="113.9" r="0.9"/><circle cx="47.6" cy="116" r="0.7"/></g>
    <path d="M42 169.6L47.2 164.4" stroke="#ececec" stroke-width="2.6" stroke-linecap="round"/><path d="M40.9 169.2L39.6 171.6L42 170.4Z" fill="#ececec" stroke="#ececec" stroke-width="0.6"/>
  </svg>
    <!-- quick styling panel -->
  <div class="panel" style="left:247.8px;top:200px;width:128.2px;height:308px"></div>
  <div class="abs" style="left:373.4px;top:206px;width:2px;height:172px;background:#262930;border-radius:1px"></div>
  <svg class="abs" style="left:355px;top:210.5px" width="8" height="7" viewBox="0 0 8 7"><path d="M1 0.6L7 6.4M7 0.6L1 6.4" stroke="#e8e8e8" stroke-width="1.2"/></svg>
  <div class="abs" style="left:258px;top:224.8px;width:23px;height:12px;border-radius:6px;background:#123059;border:1px solid #2b69c0"></div>
  <div class="abs" style="left:284px;top:224.8px;width:21.6px;height:12px;border-radius:6px;background:#1f2228;border:1px solid #31343b"></div>
  <div class="abs" style="left:309.1px;top:224.8px;width:23.5px;height:12px;border-radius:6px;background:#1f2228;border:1px solid #31343b"></div>
  <div class="sep" style="left:258px;top:247px;width:109.6px"></div>
  <svg class="abs" style="left:345px;top:257px" width="22" height="9" viewBox="345 257 22 9">
    <path d="M346.2 259.2H353.8M346.2 261.5H353.8M346.2 263.8H353.8" stroke="#e0e0e0" stroke-width="0.9"/>
    <g fill="none" stroke="#4a4d54" stroke-width="0.8"><rect x="359.6" y="259" width="2.4" height="2.2"/><rect x="363" y="259" width="2.4" height="2.2"/><rect x="359.6" y="262" width="2.4" height="2.2"/><rect x="363" y="262" width="2.4" height="2.2"/></g>
  </svg>
  <div class="abs" style="left:356px;top:277.4px;width:10px;height:9.6px;border-radius:1.5px;background:linear-gradient(90deg,#777,#ddd 40%,#eee 60%,#888)"></div>
  <div class="abs" style="left:356.3px;top:293.2px;width:9.8px;height:9.4px;border-radius:1.5px;background:#fff"></div>
  <div class="abs" style="left:356.3px;top:309px;width:9.8px;height:9.2px;border-radius:1.5px;background:#000"></div>
  <div class="sep" style="left:258px;top:331px;width:109.6px"></div>
  <div class="sep" style="left:258px;top:401px;width:109.6px"></div>
  <div class="abs" style="left:346.6px;top:452px;width:20px;height:10.7px;border-radius:5.4px;background:#1b78ea"></div>
  <div class="abs" style="left:356.8px;top:453.3px;width:8.2px;height:8.2px;border-radius:50%;background:#fff"></div>
  <div class="sep" style="left:258px;top:472.6px;width:109.6px"></div>

  <!-- history panel -->
  <div class="panel" style="left:512.2px;top:85.1px;width:128.2px;height:91.5px;border-radius:5px"></div>
  <svg class="abs" style="left:618px;top:93px" width="16" height="16" viewBox="618 93 16 16">
    <path d="M625.4 97.5A3.5 3.5 0 1 1 623.3 100.2" fill="none" stroke="#ececec" stroke-width="1.5"/>
    <path d="M621.4 99.6L625.2 99.6L623.3 102.6Z" fill="#ececec"/>
  </svg>
  <div class="abs" style="left:517.3px;top:117.3px;width:118.6px;height:14.9px;border-radius:3px;background:#2e3440"></div>
  <div class="abs" style="left:512.2px;top:137px;width:128.2px;height:1px;background:#2b2e35"></div>
  <div class="abs" style="left:521.8px;top:149px;width:108.8px;height:15.6px;border-radius:2px;border:1px solid #30333a"></div>
  <div class="abs" style="left:576.2px;top:149px;width:1px;height:15.6px;background:#30333a"></div>
  <svg class="abs" style="left:540px;top:150px" width="72" height="14" viewBox="540 150 72 14">
    <path d="M552.3 156.8H546.5M549 154.2L546.4 156.8L549 159.4" fill="none" stroke="#e6e6e6" stroke-width="1"/>
    <path d="M599.6 156.8H605.4M602.9 154.2L605.5 156.8L602.9 159.4" fill="none" stroke="#e6e6e6" stroke-width="1"/>
  </svg>
  <div class="abs" style="left:574.3px;top:169.8px;width:4.6px;height:2px;border-radius:1px;background:#555a62"></div>

  <!-- zoom controls -->
  <div class="abs" style="left:578.9px;top:527.7px;width:16.7px;height:17.3px;border-radius:3px;background:#22252b"></div>
  <svg class="abs" style="left:580px;top:529px" width="14" height="14" viewBox="580 529 14 14">
    <circle cx="586.4" cy="535.2" r="2.4" fill="none" stroke="#e8e8e8" stroke-width="1.1"/>
    <path d="M588.2 537L590.2 539" stroke="#e8e8e8" stroke-width="1.2"/>
  </svg>
  <div class="abs" style="left:601.2px;top:527.7px;width:34px;height:17.3px;border-radius:3px;background:#22252b"></div>
  <svg class="abs" style="left:601px;top:528px" width="36" height="17" viewBox="601 528 36 17">
    <path d="M609.9 533.2V539.8M606.6 536.5H613.2M623.6 536.5H630.2" stroke="#e8e8e8" stroke-width="1"/>
  </svg>
  <div class="abs" style="left:596.4px;top:544.4px;width:52.2px;height:16px;background:rgba(255,255,255,.75)"></div>

  <div class="tx" style="left:59.63px;top:55.05px;color:#f2f2f2;font-weight:bold;-webkit-text-stroke:0px #f2f2f2;transform:scale(0.2245,0.2368)">Map Style Editor</div>
<div class="tx" style="left:485.94px;top:56.29px;color:#8c8c8c;font-weight:normal;-webkit-text-stroke:1.4px #8c8c8c;transform:scale(0.1531,0.1531)">저장 전 / 발행 전</div>
<div class="tx" style="left:548.43px;top:56.14px;color:#1b1b1b;font-weight:bold;-webkit-text-stroke:0px #1b1b1b;transform:scale(0.1747,0.1929)">Save</div>
<div class="tx" style="left:581.57px;top:56.01px;color:#ffffff;font-weight:bold;-webkit-text-stroke:0px #ffffff;transform:scale(0.1777,0.1967)">Publish</div>
<div class="tx" style="left:39.10px;top:138.21px;color:#ececec;font-weight:bold;-webkit-text-stroke:0px #ececec;transform:scale(0.1980,0.2143)">Aa</div>
<div class="tx" style="left:257.68px;top:210.52px;color:#f2f2f2;font-weight:bold;-webkit-text-stroke:0.8px #f2f2f2;transform:scale(0.1590,0.1590)">빠른 스타일링</div>
<div class="tx" style="left:264.14px;top:227.61px;color:#5b9ff5;font-weight:bold;-webkit-text-stroke:0.8px #5b9ff5;transform:scale(0.1288,0.1288)">전체</div>
<div class="tx" style="left:289.56px;top:227.59px;color:#e8e8e8;font-weight:bold;-webkit-text-stroke:0.8px #e8e8e8;transform:scale(0.1377,0.1377)">심볼</div>
<div class="tx" style="left:314.58px;top:227.58px;color:#e8e8e8;font-weight:bold;-webkit-text-stroke:0.8px #e8e8e8;transform:scale(0.1413,0.1413)">건물</div>
<div class="tx" style="left:258.00px;top:258.04px;color:#f2f2f2;font-weight:bold;-webkit-text-stroke:0.8px #f2f2f2;transform:scale(0.1538,0.1538)">색상</div>
<div class="tx" style="left:257.34px;top:279.07px;color:#b8b8b8;font-weight:normal;-webkit-text-stroke:1.4px #b8b8b8;transform:scale(0.1329,0.1329)">랜드마크</div>
<div class="tx" style="left:257.45px;top:294.45px;color:#b8b8b8;font-weight:normal;-webkit-text-stroke:1.4px #b8b8b8;transform:scale(0.1373,0.1373)">일반건물</div>
<div class="tx" style="left:257.45px;top:310.35px;color:#b8b8b8;font-weight:normal;-webkit-text-stroke:1.4px #b8b8b8;transform:scale(0.1365,0.1365)">일반건물외곽선</div>
<div class="tx" style="left:257.69px;top:344.54px;color:#f2f2f2;font-weight:bold;-webkit-text-stroke:0.8px #f2f2f2;transform:scale(0.1538,0.1538)">글자</div>
<div class="tx" style="left:257.32px;top:369.46px;color:#8a8a8a;font-weight:normal;-webkit-text-stroke:1.4px #8a8a8a;transform:scale(0.1362,0.1362)">랜드마크</div>
<div class="tx" style="left:257.46px;top:378.61px;color:#c6c6c6;font-weight:normal;-webkit-text-stroke:0.5px #c6c6c6;transform:scale(0.1816,0.1733)">NotoSansCJKkr-Medium</div>
<div class="tx" style="left:257.69px;top:414.84px;color:#f2f2f2;font-weight:bold;-webkit-text-stroke:0.8px #f2f2f2;transform:scale(0.1538,0.1538)">기타</div>
<div class="tx" style="left:257.45px;top:434.39px;color:#dcdcdc;font-weight:bold;-webkit-text-stroke:0.8px #dcdcdc;transform:scale(0.1364,0.1364)">랜드마크</div>
<div class="tx" style="left:257.60px;top:453.47px;color:#9a9a9a;font-weight:normal;-webkit-text-stroke:1.4px #9a9a9a;transform:scale(0.1319,0.1319)">가시화</div>
<div class="tx" style="left:257.59px;top:483.59px;color:#dcdcdc;font-weight:bold;-webkit-text-stroke:0.8px #dcdcdc;transform:scale(0.1355,0.1355)">일반건물외곽선</div>
<div class="tx" style="left:257.58px;top:501.74px;color:#9a9a9a;font-weight:normal;-webkit-text-stroke:1.4px #9a9a9a;transform:scale(0.1408,0.1408)">크기</div>
<div class="tx" style="left:521.88px;top:96.83px;color:#f2f2f2;font-weight:bold;-webkit-text-stroke:0.8px #f2f2f2;transform:scale(0.1577,0.1577)">스타일링 히스토리</div>
<div class="tx" style="left:521.91px;top:119.63px;color:#e2e2e2;font-weight:normal;-webkit-text-stroke:1.4px #e2e2e2;transform:scale(0.1429,0.1429)">시작</div>
<div class="tx" style="left:598.46px;top:549.81px;color:#383838;font-weight:normal;-webkit-text-stroke:0.5px #383838;transform:scale(0.1443,0.1378)">© NAVER Corp.</div>
</div></div>
</body></html>
